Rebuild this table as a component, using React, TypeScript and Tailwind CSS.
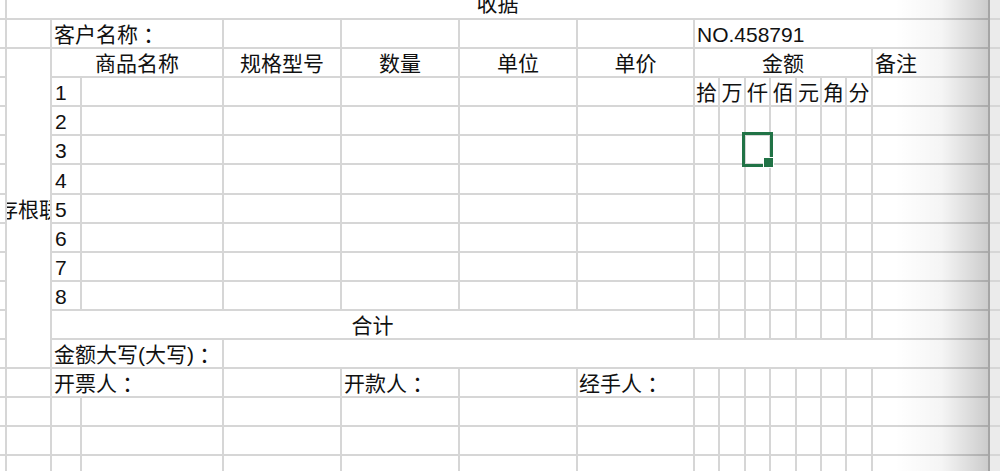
import React from 'react';

// Excel-like receipt sheet, grid gap draws the cell borders
type CellProps = { className?: string; children?: React.ReactNode };

const C: React.FC<CellProps> = ({ className = '', children }) => (
  <div className={`bg-white flex items-center overflow-hidden whitespace-nowrap pt-[2px] ${className}`}>
    {children}
  </div>
);

// centred full-width colon, as Excel shows it
const Colon: React.FC = () => <span className="font-['Noto_Sans_CJK_TC']">：</span>;

// right-most strip beyond the page edge
const G: React.FC = () => <div className="bg-[#ebebeb]" />;

const units = ['拾', '万', '仟', '佰', '元', '角', '分'];

const UnitCells: React.FC<{ labels?: boolean }> = ({ labels }) => (
  <>
    {units.map((u) => (
      <C key={u} className="justify-center">
        {labels ? u : null}
      </C>
    ))}
  </>
);

const ItemRow: React.FC<{ n: number }> = ({ n }) => (
  <>
    <C />
    <C className="pl-[3px]">{n}</C>
    <C />
    <C />
    <C />
    <C />
    <C />
    <UnitCells labels={n === 1} />
    <C />
    <G />
  </>
);

const BlankRow: React.FC = () => (
  <>
    <C />
    <C />
    <C />
    <C />
    <C />
    <C />
    <C />
    <C />
    <UnitCells />
    <C />
    <G />
  </>
);

const App: React.FC = () => {
  return (
    <div
      className="relative w-[1000px] h-[471px] overflow-hidden bg-white text-[21px] leading-[27px] text-[#111]"
      style={{ fontFamily: '"Liberation Sans", "Noto Sans CJK SC", sans-serif' }}
    >
      <div className="grid h-full gap-[2px] bg-[#d6d6d6] grid-cols-[5px_43px_28px_140px_116px_116px_116px_115px_23px_24px_23px_24px_23px_23px_24px_115px_1fr] grid-rows-[18px_27px_27px_27px_27px_27px_28px_27px_27px_27px_27px_27px_27px_27px_27px_27px_1fr]">
        {/* title */}
        <div className="bg-white" />
        <div className="col-span-15 bg-white flex items-end justify-center overflow-visible pb-[4px]">
          <span className="leading-[21px]">收据</span>
        </div>
        <G />

        {/* customer row */}
        <C />
        <C />
        <C className="col-span-2 pl-[2px]">
          客户名称<Colon />
        </C>
        <C />
        <C />
        <C />
        <C />
        <C className="col-span-8 pl-[2px]">NO.458791</C>
        <G />

        {/* header row */}
        <C />
        <C className="row-span-11 justify-center">存根联</C>
        <C className="col-span-2 justify-center">商品名称</C>
        <C className="justify-center">规格型号</C>
        <C className="justify-center">数量</C>
        <C className="justify-center">单位</C>
        <C className="justify-center">单价</C>
        <C className="col-span-7 justify-center">金额</C>
        <C className="pl-[2px]">备注</C>
        <G />

        {[1, 2, 3, 4, 5, 6, 7, 8].map((n) => (
          <ItemRow key={n} n={n} />
        ))}

        {/* total */}
        <C />
        <C className="col-span-6 justify-center">合计</C>
        <UnitCells />
        <C />
        <G />

        {/* amount in words */}
        <C />
        <C className="col-span-2 pl-[2px]">
          金额大写(大写)<Colon />
        </C>
        <C className="col-span-12" />
        <G />

        {/* signatures */}
        <C />
        <C />
        <C className="col-span-2 pl-[2px]">
          开票人<Colon />
        </C>
        <C />
        <C className="pl-[2px]">
          开款人<Colon />
        </C>
        <C />
        <C className="pl-[1px]">
          经手人<Colon />
        </C>
        <UnitCells />
        <C />
        <G />

        <BlankRow />
        <BlankRow />
        <BlankRow />
      </div>

      {/* page edge shading */}
      <div className="pointer-events-none absolute top-0 left-[895px] w-[93px] h-full bg-linear-to-r from-transparent via-black/[0.04] to-black/20" />
      <div className="pointer-events-none absolute top-0 left-[988px] w-[2px] h-full bg-[#a5a5a5]" />

      {/* selected cell */}
      <div className="pointer-events-none absolute left-[742px] top-[132px] w-[31px] h-[35px] border-[3px] border-[#217346]" />
      <div className="pointer-events-none absolute left-[763px] top-[157px] w-[11px] h-[11px] bg-[#217346] border border-white" />
    </div>
  );
};

export default App;
